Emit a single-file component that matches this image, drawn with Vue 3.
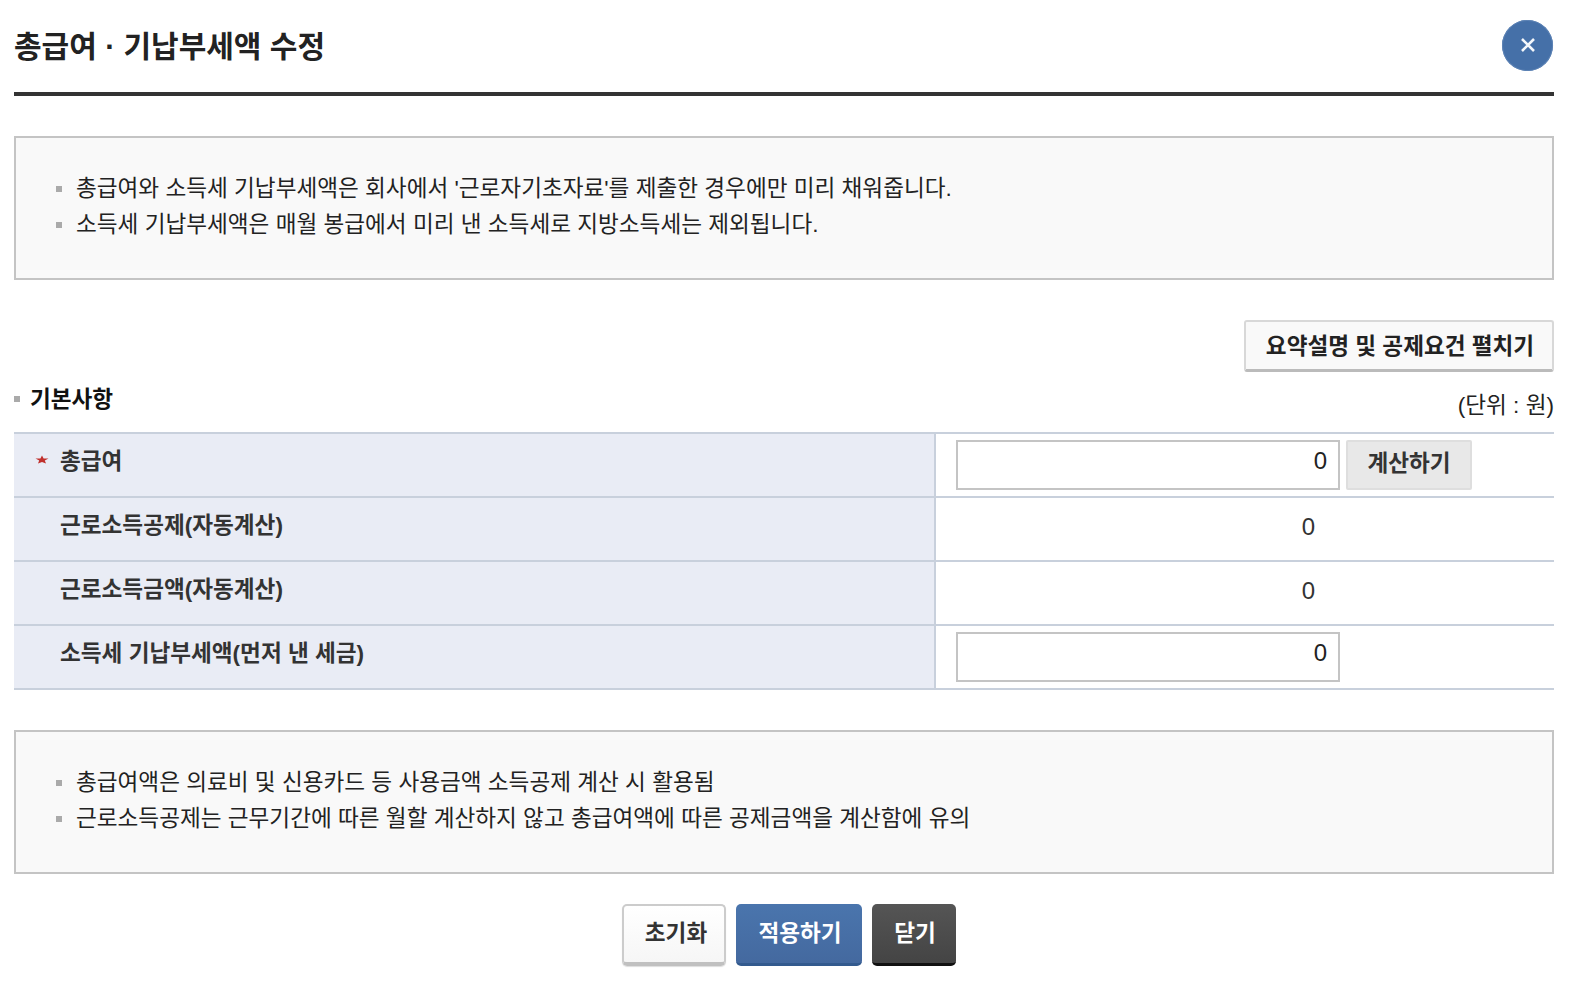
<script setup>
const notes1 = [
  "총급여와 소득세 기납부세액은 회사에서 '근로자기초자료'를 제출한 경우에만 미리 채워줍니다.",
  '소득세 기납부세액은 매월 봉급에서 미리 낸 소득세로 지방소득세는 제외됩니다.',
]
const notes2 = [
  '총급여액은 의료비 및 신용카드 등 사용금액 소득공제 계산 시 활용됨',
  '근로소득공제는 근무기간에 따른 월할 계산하지 않고 총급여액에 따른 공제금액을 계산함에 유의',
]
</script>

<template>
  <div class="page">
    <header class="head">
      <h1 class="title">총급여 · 기납부세액 수정</h1>
      <button class="close" type="button" aria-label="닫기">
        <svg width="18" height="18" viewBox="0 0 18 18"><path d="M3 3L15 15M15 3L3 15" stroke="#f4f7fb" stroke-width="2.6" fill="none"/></svg>
      </button>
    </header>

    <ul class="notes first">
      <li v-for="n in notes1" :key="n">{{ n }}</li>
    </ul>

    <div class="toggle-row">
      <button class="toggle" type="button">요약설명 및 공제요건 펼치기</button>
    </div>

    <div class="sec-head">
      <h2 class="sec-title">기본사항</h2>
      <span class="unit">(단위 : 원)</span>
    </div>

    <div class="table">
      <div class="row">
        <div class="th"><svg class="star" width="14" height="12" viewBox="0 0 14 12"><path d="M7 1.5L8.6 4.4H13.5L9.8 6.6L11 9.6L7 8L3 9.6L4.2 6.6L.5 4.4H5.4Z" fill="#c0302c"/></svg>총급여</div>
        <div class="td">
          <div class="input">0</div>
          <button class="calc" type="button">계산하기</button>
        </div>
      </div>
      <div class="row">
        <div class="th">근로소득공제(자동계산)</div>
        <div class="td value">0</div>
      </div>
      <div class="row">
        <div class="th">근로소득금액(자동계산)</div>
        <div class="td value">0</div>
      </div>
      <div class="row">
        <div class="th">소득세 기납부세액(먼저 낸 세금)</div>
        <div class="td"><div class="input">0</div></div>
      </div>
    </div>

    <ul class="notes second">
      <li v-for="n in notes2" :key="n">{{ n }}</li>
    </ul>

    <div class="actions">
      <button class="btn white" type="button">초기화</button>
      <button class="btn blue" type="button">적용하기</button>
      <button class="btn dark" type="button">닫기</button>
    </div>
  </div>
</template>

<style scoped>
.page {
  box-sizing: border-box;
  width: 1576px;
  height: 992px;
  padding: 0 22px 0 14px;
  font-family: "Liberation Sans", "Noto Sans CJK KR", sans-serif;
  color: #222;
  overflow: hidden;
}
button { font-family: inherit; cursor: pointer; }
.head {
  height: 92px;
  border-bottom: 4px solid #333;
  display: flex;
  align-items: center;
  justify-content: space-between;
  box-sizing: content-box;
}
.title { margin: 0; font-size: 30px; font-weight: 700; letter-spacing: 0; color: #222; position: relative; top: -2px; }
.close {
  width: 51px; height: 51px; border-radius: 50%; border: 0; padding: 0;
  background: #4570a8; margin-right: 1px; display: flex; align-items: center; justify-content: center;
  position: relative; top: -1px; box-shadow: inset 0 0 0 1px #5d83b5;
}
.notes {
  list-style: none; margin: 0; box-sizing: border-box; height: 144px;
  padding: 33px 0 0 40px;
  border: 2px solid #c4c4c4; background: #f9f9f9;
  font-size: 22.6px; line-height: 36px; color: #222;
}
.first { margin-top: 40px; }
.notes li { position: relative; padding-left: 20px; }
.notes li::before {
  content: ""; position: absolute; left: 0; top: 15px; width: 6px; height: 6px; background: #aaa;
}
.toggle-row { display: flex; justify-content: flex-end; margin-top: 40px; }
.toggle {
  width: 310px; height: 52px; padding: 0 0 3px 2px; font-size: 22.6px; font-weight: 700; color: #222;
  background: #f9f9f9; border: 2px solid #d8d8d8; border-bottom: 3px solid #bbb; border-radius: 3px;
}
.sec-head { display: flex; justify-content: space-between; align-items: flex-end; height: 60px; }
.sec-title {
  margin: 0; font-size: 22.6px; font-weight: 700; color: #111; padding-left: 16px; position: relative; line-height: 34px; top: -15px;
}
.sec-title::before {
  content: ""; position: absolute; left: 0; top: 13px; width: 6px; height: 6px; background: #aaa;
}
.unit { font-size: 22.6px; line-height: 34px; color: #222; position: relative; top: -9px; }
.table { border-top: 2px solid #c8d0dc; }
.row {
  display: grid; grid-template-columns: 922px 1fr; height: 64px; box-sizing: border-box;
  border-bottom: 2px solid #c8d0dc;
}
.th {
  background: #e9ecf5; border-right: 2px solid #c8d0dc;
  font-size: 22.6px; font-weight: 700; color: #333; padding-left: 46px; line-height: 56px; position: relative;
}
.star { position: absolute; left: 21px; top: 20px; }
.td { display: flex; padding: 6px 0 0 20px; gap: 6px; font-size: 24px; }
.value { justify-content: center; padding: 0; width: 745px; line-height: 58px; color: #333; }
.input {
  box-sizing: border-box; width: 384px; height: 50px; border: 2px solid #c4c4c4; background: #fff;
  text-align: right; padding-right: 11px; line-height: 38px; color: #222;
}
.calc {
  width: 126px; height: 50px; padding: 0 0 7px; font-size: 22.6px; font-weight: 700; color: #333;
  background: #e8e8e8; border: 2px solid #dedede; border-radius: 2px;
}
.second { margin-top: 40px; }
.actions { display: flex; justify-content: center; gap: 10px; margin-top: 30px; padding-left: 10px; }
.btn { height: 62px; padding: 0 0 5px 2px; font-size: 22.6px; font-weight: 700; border-radius: 5px; }
.white { width: 104px; padding-left: 4px; color: #333; background: linear-gradient(#fff, #f6f6f6); border: 2px solid #ccc; border-bottom: 4px solid #c0c0c0; box-shadow: 0 1px 1px #ddd; }
.blue { width: 126px; color: #fff; background: linear-gradient(#4a75ad, #44699f); border: 0; border-bottom: 3px solid #335a8e; }
.dark { width: 84px; color: #fff; background: linear-gradient(#555, #444); border: 0; border-bottom: 3px solid #111; }
</style>
